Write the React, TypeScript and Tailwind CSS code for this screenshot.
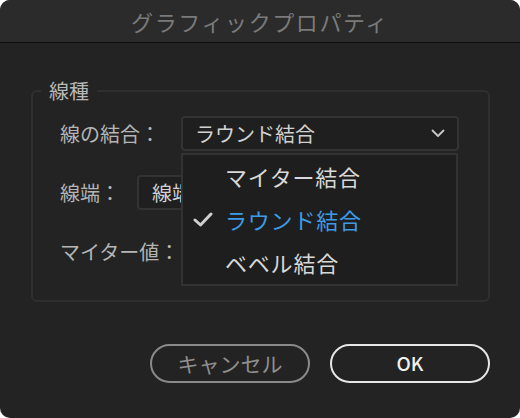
const font = { fontFamily: '"Noto Sans CJK JP", "Noto Sans", sans-serif' };

const Chevron = () => (
  <svg width="14" height="9" viewBox="0 0 14 9" fill="none">
    <path d="M1.5 1.5 L7 7 L12.5 1.5" stroke="#c8c8c8" strokeWidth="1.8" strokeLinecap="round" strokeLinejoin="round" />
  </svg>
);

const Check = () => (
  <svg width="20" height="15" viewBox="0 0 20 15" fill="none">
    <path d="M2 8 L7.5 13 L18 2" stroke="#cfcfcf" strokeWidth="3" strokeLinecap="round" strokeLinejoin="round" />
  </svg>
);

const items = [
  { label: "マイター結合", selected: false },
  { label: "ラウンド結合", selected: true },
  { label: "ベベル結合", selected: false },
];

export default function App() {
  return (
    <div className="h-[418px] w-[520px] bg-white" style={font}>
      <div className="flex h-full flex-col overflow-hidden rounded-[10px] bg-[#232323]">
        <div className="flex h-[43px] shrink-0 items-center justify-center border-b border-[#0c0c0c] bg-[#2b2b2c]">
          <span className="pt-[1px] text-[22px] tracking-[1.6px] text-[#7a7a7a]">グラフィックプロパティ</span>
        </div>

        <div className="flex flex-1 flex-col pl-[31px] pr-[30px] pt-[35px]">
          <fieldset className="rounded-[6px] border-2 border-[#2f2f2f] pb-[31px] pt-[13px]">
            <legend className="ml-[8px] px-[8px] text-[20px] leading-[25px] text-[#b8b8b8]">線種</legend>

            <div className="flex flex-col gap-[24px] px-[27px]">
              <div className="flex h-[35px] items-center">
                <span className="w-[121px] text-[20px] text-[#b5b5b5]">線の結合：</span>
                <div className="relative w-[278px]">
                  <div className="flex h-[35px] items-center justify-between rounded-[4px] border-2 border-[#333] bg-[#1f1f1f] pl-[12px] pr-[12px]">
                    <span className="text-[20px] text-[#d2d2d2]">ラウンド結合</span>
                    <Chevron />
                  </div>
                  <div className="absolute left-0 top-full z-10 mt-[2px] flex w-[277px] flex-col border-2 border-[#323232] bg-[#1e1e1e]">
                    {items.map((it) => (
                      <div key={it.label} className="flex h-[43px] items-center">
                        <span className="flex w-[42px] justify-end pr-[12px]">{it.selected && <Check />}</span>
                        <span className={`text-[22px] tracking-[0.8px] ${it.selected ? "text-[#3d9be6]" : "text-[#d8d8d8]"}`}>{it.label}</span>
                      </div>
                    ))}
                  </div>
                </div>
              </div>

              <div className="flex h-[35px] items-center">
                <span className="w-[77px] text-[20px] text-[#b5b5b5]">線端：</span>
                <div className="flex h-[35px] w-[200px] items-center rounded-[4px] border-2 border-[#333] bg-[#1f1f1f] pl-[13px]">
                  <span className="text-[20px] text-[#d2d2d2]">線端</span>
                </div>
              </div>

              <div className="flex h-[35px] items-center">
                <span className="text-[20px] text-[#b5b5b5]">マイター値：</span>
              </div>
            </div>
          </fieldset>

          <div className="mt-[42px] flex justify-end gap-[20px]">
            <button className="flex h-[39px] w-[160px] items-center justify-center rounded-full border-2 border-[#8a8a8a] text-[21px] text-[#8f8f8f]">
              キャンセル
            </button>
            <button className="flex h-[39px] w-[160px] items-center justify-center rounded-full border-2 border-[#e6e6e6] text-[19px] font-medium text-[#f0f0f0]">
              OK
            </button>
          </div>
        </div>
      </div>
    </div>
  );
}
